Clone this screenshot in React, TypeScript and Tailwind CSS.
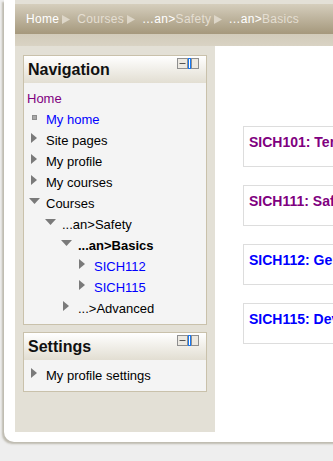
import React from "react";

const RightTri = () => (
  <svg width="6" height="10" viewBox="0 0 6 10" className="block">
    <polygon points="0,0 6,5 0,10" fill="#7a7a7a" />
  </svg>
);
const DownTri = () => (
  <svg width="11" height="6" viewBox="0 0 11 6" className="block">
    <polygon points="0,0 11,0 5.5,6" fill="#7a7a7a" />
  </svg>
);
const Bullet = () => <div className="w-[5px] h-[5px] bg-[#a8a8a8] border border-[#8c8c8c]" />;

const Crumb = () => (
  <svg width="8" height="9" viewBox="0 0 8 9" className="inline-block align-[-1px]">
    <polygon points="0,0 8,4.5 0,9" fill="#ddd6c8" />
  </svg>
);

const HeaderIcons = () => (
  <svg width="23" height="12" viewBox="0 0 23 12" className="absolute right-[6px] top-[2px]">
    <rect x="0.5" y="0.5" width="10" height="10" fill="#ece9e2" stroke="#8f8f8f" />
    <line x1="2.5" y1="5.5" x2="8.5" y2="5.5" stroke="#555" />
    <rect x="11.5" y="0.5" width="2" height="10" fill="#ffffff" stroke="#1877f0" />
    <rect x="14.5" y="0.5" width="7" height="10" fill="#ece9e2" stroke="#8f8f8f" />
  </svg>
);

type Row = {
  text: string;
  level: number;
  icon: "right" | "down" | "bullet";
  color?: string;
  bold?: boolean;
};

const levelPad: Record<number, string> = {
  1: "pl-[2px]",
  2: "pl-[18px]",
  3: "pl-[34px]",
  4: "pl-[50px]",
};

const TreeRow = ({ r }: { r: Row }) => (
  <div className={`flex items-start leading-[21px] h-[21px] ${levelPad[r.level]}`}>
    <div className="w-[16px] h-[16px] flex items-center justify-center shrink-0">
      {r.icon === "right" ? <RightTri /> : r.icon === "down" ? <DownTri /> : <Bullet />}
    </div>
    <span className={`ml-[4px] whitespace-nowrap ${r.bold ? "font-bold" : ""} ${r.color ?? "text-black"}`}>
      {r.text}
    </span>
  </div>
);

const Block = ({ title, children }: { title: string; children: React.ReactNode }) => (
  <div className="border border-[#c9c1ab] bg-[#f4f4f4]">
    <div className="relative h-[27px] bg-gradient-to-b from-[#ffffff] to-[#e2ded2] pl-[4px] pt-[5px] text-[16px] leading-[18px] font-bold text-[#111]">
      {title}
      <HeaderIcons />
    </div>
    <div className="pt-[5px] pb-[5px] text-[13px]">{children}</div>
  </div>
);

const navRows: Row[] = [
  { text: "My home", level: 1, icon: "bullet", color: "text-[#0000ff]" },
  { text: "Site pages", level: 1, icon: "right" },
  { text: "My profile", level: 1, icon: "right" },
  { text: "My courses", level: 1, icon: "right" },
  { text: "Courses", level: 1, icon: "down" },
  { text: "...an>Safety", level: 2, icon: "down" },
  { text: "...an>Basics", level: 3, icon: "down", bold: true },
  { text: "SICH112", level: 4, icon: "right", color: "text-[#0000ff]" },
  { text: "SICH115", level: 4, icon: "right", color: "text-[#0000ff]" },
  { text: "...>Advanced", level: 3, icon: "right" },
];

const courses = [
  { t: "SICH101: Terminology", c: "text-[#800080]" },
  { t: "SICH111: Safety Basics", c: "text-[#800080]" },
  { t: "SICH112: General Rules", c: "text-[#0000ff]" },
  { t: "SICH115: Devices", c: "text-[#0000ff]" },
];

export default function App() {
  return (
    <div className="w-[333px] h-[461px] bg-[#eeeeee] overflow-hidden font-['Liberation_Sans',Arial,sans-serif]">
      <div className="ml-[4px] w-[420px] h-[442px] bg-white rounded-bl-[10px] pl-[11px] pb-[10px] shadow-[-2px_2px_2px_rgba(130,125,100,0.45)]">
        <div className="h-[432px] flex flex-col">
          <div className="h-[4px] bg-[#e3e0d7]" />
          <div className="h-[30px] bg-gradient-to-b from-[#d5cebd] to-[#a5987c] pl-[11px] text-[12px] tracking-[0.3px] leading-[30px] whitespace-nowrap text-[#e4ded2]">
            <span className="text-white">Home</span>
            <span className="ml-[3px]"><Crumb /></span>
            <span className="ml-[7px]">Courses</span>
            <span className="ml-[3px]"><Crumb /></span>
            <span className="ml-[7px] text-white">…an&gt;</span>
            <span>Safety</span>
            <span className="ml-[3px]"><Crumb /></span>
            <span className="ml-[6px] text-white">…an&gt;</span>
            <span>Basics</span>
          </div>
          <div className="h-[12px] bg-gradient-to-b from-[#d2cbba] to-[#d9d3c4]" />
          <div className="flex flex-1">
            <div className="w-[200px] shrink-0 bg-[#e3e0d6] px-[8px] pt-[9px] flex flex-col gap-[7px]">
              <Block title="Navigation">
                <div className="leading-[21px] h-[21px] pl-[3px] text-[#800080]">Home</div>
                {navRows.map((r, i) => (
                  <TreeRow key={i} r={r} />
                ))}
              </Block>
              <Block title="Settings">
                <TreeRow r={{ text: "My profile settings", level: 1, icon: "right" }} />
              </Block>
            </div>
            <div className="flex-1 bg-white pl-[28px] pt-[80px] flex flex-col gap-[18px]">
              {courses.map((c, i) => (
                <div key={i} className="h-[41px] w-[300px] border border-[#dddddd] pl-[5px] pt-[7px]">
                  <div className={`text-[14px] leading-[16px] font-bold whitespace-nowrap ${c.c}`}>{c.t}</div>
                </div>
              ))}
            </div>
          </div>
        </div>
      </div>
    </div>
  );
}
